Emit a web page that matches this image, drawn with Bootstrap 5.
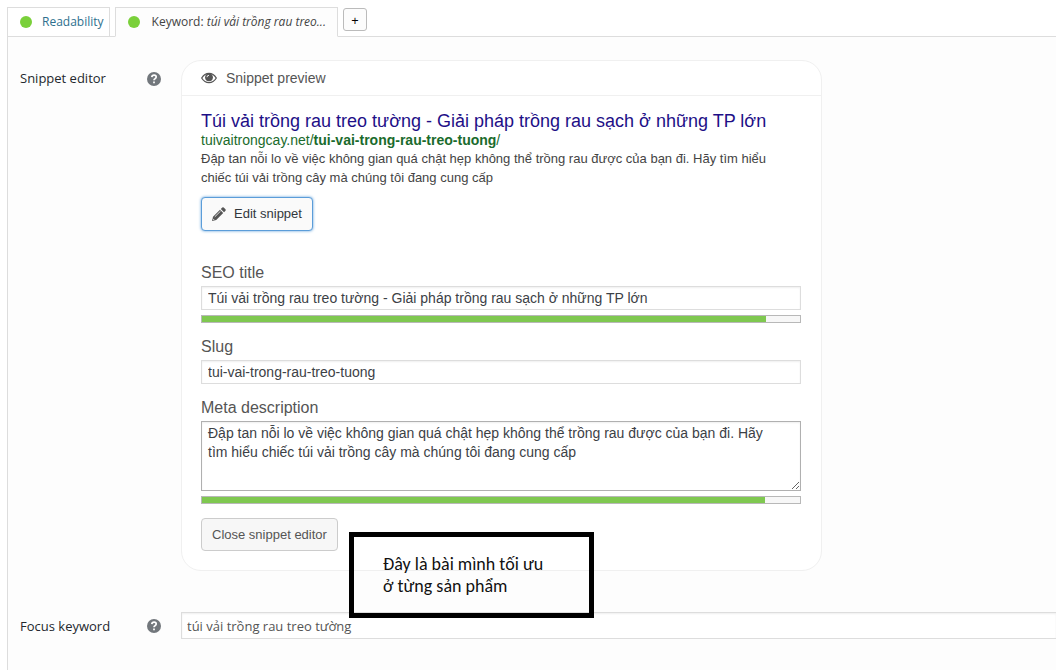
<!DOCTYPE html>
<html lang="vi">
<head>
<meta charset="utf-8">
<meta name="viewport" content="width=device-width, initial-scale=1">
<title>Snippet editor</title>
<link href="https://cdn.jsdelivr.net/npm/bootstrap@5.3.0/dist/css/bootstrap.min.css" rel="stylesheet">
<script src="https://cdn.jsdelivr.net/npm/bootstrap@5.3.0/dist/js/bootstrap.bundle.min.js" defer></script>
<style>
body{font:13px/20px "Open Sans","Noto Sans",sans-serif;color:#23282d;background:#fff;padding:7px 0 0 7px}
.seo-tabs{height:30px;gap:5px;margin-bottom:-1px}
.seo-tabs .nav-link{height:30px;padding:0 5px 0 12px;border:1px solid #ddd;border-radius:0;color:#2e6f8e;background:#fff;display:flex;align-items:center;gap:10px;white-space:nowrap;font-size:12px}
.seo-tabs .nav-link.active{padding-right:11px;gap:12px;color:#444;background:#fdfdfd;border-bottom-color:#fdfdfd}
.dot{width:12px;height:12px;border-radius:50%;background:#7ad03a;flex:none}
.add-btn{width:24px;height:23px;margin-top:1px;padding:0;border:1px solid #bbb;border-radius:3px;background:#fcfcfc;color:#000;font-size:13px;line-height:20px}
.panel{min-height:634px;border:1px solid #ddd;border-width:1px 0 0 1px;background:#fdfdfd;padding:23px 0 0 12px}
.side{width:161px;flex:none;padding-right:20px}
.help{width:14px;height:14px;padding:0;border:0;background:none;display:flex}
.snippet{width:641px;max-width:100%;border:1px solid #f0f0f0;border-radius:20px;background:#fff;font-family:"Liberation Sans",Arial,sans-serif;color:#555}
.snippet-head{height:35px;padding:0 19px;border-bottom:1px solid #f0f0f0;font-size:14px;gap:9px}
.snippet-body{padding:15px 20px 19px 19px}
.s-title{font-size:18px;line-height:20px;color:#1e0f87;text-decoration:none}
.s-url{font-size:14px;line-height:18px;color:#1a6b2c}
.s-desc{font-size:13px;line-height:19px;color:#444;margin-bottom:10px;padding-right:20px}
.s-btn{height:33px;padding:0 10px;font-size:13px;line-height:20px;border:1px solid #ccc;border-radius:4px;background:#f7f7f7;color:#555}
.s-btn.edit{height:34px;border-color:#5b9dd9;box-shadow:0 0 3px #5b9dd9;color:#32373c;background:#fafafa}
.s-fields{display:grid;gap:14px;margin-top:32px}
.s-label{font-size:16px;line-height:20px;display:block;margin-bottom:3px}
.s-input{display:block;width:100%;border:1px solid #ddd;background:#fff;color:#3c4146;font-size:14px;padding:0 6px;height:24px;border-radius:0;box-shadow:inset 0 1px 2px #0001}
textarea.s-input{height:70px;line-height:19px;padding:2px 24px 2px 6px;border-color:#b0b0b0;resize:vertical}
.meter{height:8px;border:1px solid #b8b8b8;background:#f7f7f7;margin-top:5px}
.meter-fill{height:100%;background:#7fc850}
.focus-row{margin-top:41px}
.focus-input{flex:1;min-width:0;height:27px;border:1px solid #ddd;border-right:0;background:#fff;color:#555;padding:0 5px;font-size:13px;box-shadow:inset 0 1px 2px #0001}
.note{position:absolute;left:167px;bottom:-48px;z-index:1;width:245px;border:5px solid #000;padding:16px 29px;font:18px/22px Carlito,"Noto Sans","Open Sans",sans-serif;color:#111;white-space:nowrap}
</style>
</head>
<body>
<nav class="nav seo-tabs">
  <a class="nav-link" href="#readability"><span class="dot"></span>Readability</a>
  <a class="nav-link active" href="#keyword"><span class="dot"></span><span>Keyword: <em>túi vải trồng rau treo...</em></span></a>
  <button class="add-btn" type="button" aria-label="Add keyword">+</button>
</nav>
<main class="panel">
  <div class="d-flex">
    <div class="side d-flex justify-content-between pt-2"><span>Snippet editor</span>
      <button class="help mt-1" type="button" aria-label="Help"><svg width="14" height="14" viewBox="0 0 14 14"><circle cx="7" cy="7" r="7" fill="#72777c"/><path d="M4.8 5.2Q5 3.2 7.1 3.2T9.2 5.1Q9.2 6 8 6.8Q7 7.4 7 8.3M7 9.6v1.6" fill="none" stroke="#fff" stroke-width="1.7"/></svg></button>
    </div>
    <section class="snippet position-relative">
      <div class="snippet-head d-flex align-items-center"><svg width="16" height="12" viewBox="0 0 16 12"><path d="M.7 6Q3.5 1.3 8 1.3T15.3 6Q12.5 10.7 8 10.7T.7 6Z" fill="none" stroke="#555" stroke-width="1.3"/><circle cx="8" cy="5.3" r="3.9" fill="#555"/><path d="M6 5.2Q6 3.3 8 3.3" fill="none" stroke="#fff" stroke-width=".9"/></svg><span>Snippet preview</span></div>
      <div class="snippet-body">
        <a class="s-title d-block" href="#preview">Túi vải trồng rau treo tường - Giải pháp trồng rau sạch ở những TP lớn</a>
        <div class="s-url">tuivaitrongcay.net/<b>tui-vai-trong-rau-treo-tuong</b>/</div>
        <p class="s-desc">Đập tan nỗi lo về việc không gian quá chật hẹp không thể trồng rau được của bạn đi. Hãy tìm hiểu chiếc túi vải trồng cây mà chúng tôi đang cung cấp</p>
        <button class="s-btn edit d-flex align-items-center gap-2" type="button"><svg width="14" height="14" viewBox="0 0 14 14"><path d="M0 14L1 9.8 8 2.8 11.2 6 4.2 13ZM8.8 2L10.3.5Q11 0 11.7.5L13.5 2.3Q14 3 13.5 3.7L12 5.2Z" fill="#555"/><path d="M2.8 9.8L8.5 4.2M1 11.8l1.2 1.2" stroke="#fff" stroke-width=".8"/></svg>Edit snippet</button>
        <div class="s-fields">
          <div>
            <label class="s-label" for="title">SEO title</label>
            <input class="s-input" id="title" value="Túi vải trồng rau treo tường - Giải pháp trồng rau sạch ở những TP lớn">
            <div class="meter"><div class="meter-fill" style="width:94.3%"></div></div>
          </div>
          <div>
            <label class="s-label" for="slug">Slug</label>
            <input class="s-input" id="slug" value="tui-vai-trong-rau-treo-tuong">
          </div>
          <div>
            <label class="s-label" for="meta">Meta description</label>
            <textarea class="s-input" id="meta">Đập tan nỗi lo về việc không gian quá chật hẹp không thể trồng rau được của bạn đi. Hãy tìm hiểu chiếc túi vải trồng cây mà chúng tôi đang cung cấp</textarea>
            <div class="meter"><div class="meter-fill" style="width:94.2%"></div></div>
          </div>
          <div><button class="s-btn" type="button">Close snippet editor</button></div>
        </div>
      </div>
      <aside class="note">Đây là bài mình tối ưu<br>ở từng sản phẩm</aside>
    </section>
  </div>
  <div class="d-flex align-items-center focus-row">
    <div class="side d-flex justify-content-between align-items-center"><label for="focus">Focus keyword</label>
      <button class="help" type="button" aria-label="Help"><svg width="14" height="14" viewBox="0 0 14 14"><circle cx="7" cy="7" r="7" fill="#72777c"/><path d="M4.8 5.2Q5 3.2 7.1 3.2T9.2 5.1Q9.2 6 8 6.8Q7 7.4 7 8.3M7 9.6v1.6" fill="none" stroke="#fff" stroke-width="1.7"/></svg></button>
    </div>
    <input class="focus-input" id="focus" value="túi vải trồng rau treo tường">
  </div>
</main>
</body>
</html>
